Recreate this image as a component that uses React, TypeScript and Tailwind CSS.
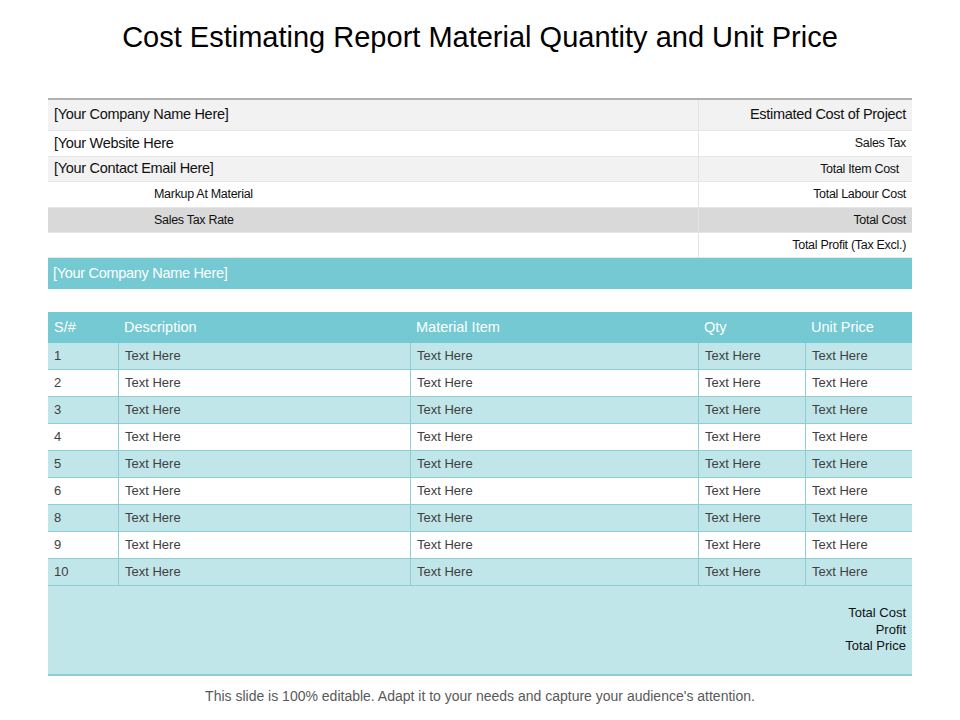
import React from "react";

const top = [
  { l: "[Your Company Name Here]", r: "Estimated Cost of Project", bg: "bg-[#f2f2f2]", h: "h-[31px]", big: true, indent: false },
  { l: "[Your Website Here", r: "Sales Tax", bg: "bg-white", h: "h-[26px]", big: true, indent: false },
  { l: "[Your Contact Email Here]", r: "Total Item Cost", bg: "bg-[#f2f2f2]", h: "h-[25px]", big: true, indent: false, pr: true },
  { l: "Markup At Material", r: "Total Labour Cost", bg: "bg-white", h: "h-[26px]", big: false, indent: true },
  { l: "Sales Tax Rate", r: "Total Cost", bg: "bg-[#d9d9d9]", h: "h-[25px]", big: false, indent: true },
  { l: "", r: "Total Profit (Tax Excl.)", bg: "bg-white", h: "h-[25px]", big: false, indent: false },
];

const rows = ["1", "2", "3", "4", "5", "6", "8", "9", "10"];
const cols = "grid grid-cols-[70px_292px_288px_107px_107px]";

export default function App() {
  return (
    <div className="w-[960px] h-[720px] bg-white relative" style={{ fontFamily: "'Liberation Sans', Arial, sans-serif" }}>
      <h1 className="text-center text-[29px] text-black pt-[18px] leading-[38px]">
        Cost Estimating Report Material Quantity and Unit Price
      </h1>
      <div className="mx-[48px] mt-[42px] border-t-2 border-[#b0b0b0]">
        {top.map((r, i) => (
          <div key={i} className={`flex ${r.h} ${r.bg} text-[#111] border-b border-[#e6e6e6]`}>
            <div className={`w-[650px] flex items-center ${r.indent ? "pl-[106px] text-[12.5px]" : "pl-[6px] text-[14.5px]"} tracking-[-0.3px]`}>{r.l}</div>
            <div className={`flex-1 flex items-center justify-end border-l border-[#e3e3e3] ${r.pr ? "pr-[13px]" : "pr-[6px]"} ${i === 0 ? "text-[14.5px]" : "text-[12.5px]"} tracking-[-0.3px]`}>{r.r}</div>
          </div>
        ))}
        <div className="h-[31px] bg-[#74c9d3] text-white flex items-center pl-[5px] text-[14.5px] tracking-[-0.3px]">[Your Company Name Here]</div>
      </div>
      <div className="mx-[48px] mt-[23px] text-[13px] text-[#404040]">
        <div className={`${cols} h-[31px] bg-[#74c9d3] text-white text-[14.5px]`}>
          {["S/#", "Description", "Material Item", "Qty", "Unit Price"].map((h) => (
            <div key={h} className="flex items-center pl-[6px]">{h}</div>
          ))}
        </div>
        {rows.map((n, i) => (
          <div key={n} className={`${cols} h-[27px] border-b border-[#8fcdd6] ${i % 2 === 0 ? "bg-[#c0e6ea]" : "bg-white"}`}>
            {[n, "Text Here", "Text Here", "Text Here", "Text Here"].map((t, j) => (
              <div key={j} className={`flex items-center pl-[6px] ${j > 0 ? "border-l border-[#8fcdd6]" : ""}`}>{t}</div>
            ))}
          </div>
        ))}
        <div className="h-[90px] bg-[#c0e6ea] border-b-2 border-[#8fcdd6] flex flex-col items-end justify-center pr-[6px] text-[13px] text-[#111] leading-[16.5px]">
          <div>Total Cost</div>
          <div>Profit</div>
          <div>Total Price</div>
        </div>
      </div>
      <div className="text-center text-[14px] text-[#595959] mt-[10px]">
        This slide is 100% editable. Adapt it to your needs and capture your audience's attention.
      </div>
    </div>
  );
}
